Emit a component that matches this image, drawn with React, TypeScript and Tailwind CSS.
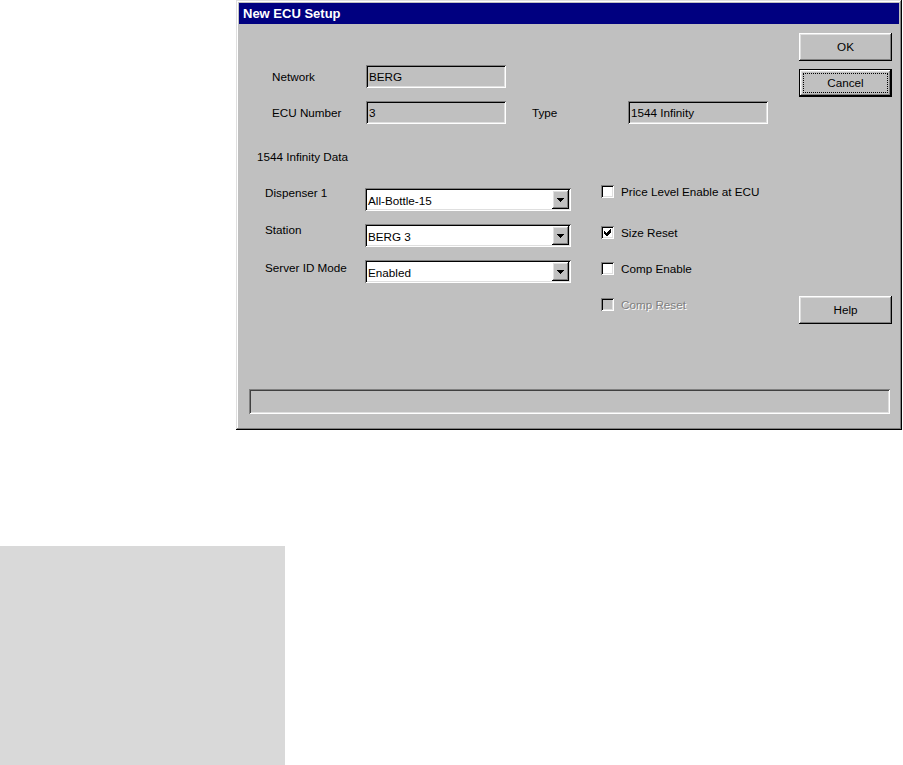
import React from "react";

const sunken =
  "shadow-[inset_1px_1px_#808080,inset_-1px_-1px_#ffffff,inset_2px_2px_#000000,inset_-2px_-2px_#dfdfdf]";
const raised =
  "shadow-[inset_-1px_-1px_#000000,inset_1px_1px_#ffffff,inset_-2px_-2px_#808080,inset_2px_2px_#dfdfdf]";

function Field({ value, width }: { value: string; width: string }) {
  return (
    <div className={`${sunken} ${width} h-[23px] bg-[#c0c0c0] flex items-center pl-[3px]`}>
      {value}
    </div>
  );
}

function Combo({ value }: { value: string }) {
  return (
    <div className={`${sunken} w-[206px] h-[23px] bg-white flex items-stretch p-[2px]`}>
      <span className="flex-1 pl-[1px] pt-[4px] leading-[14px]">{value}</span>
      <div className={`${raised} w-[17px] bg-[#c0c0c0] flex items-center justify-center`}>
        <svg width="7" height="4" viewBox="0 0 7 4" shapeRendering="crispEdges">
          <polygon points="0,0 7,0 4,4 3,4" fill="#000" />
        </svg>
      </div>
    </div>
  );
}

function Check({
  label,
  checked,
  disabled,
  className = "",
}: {
  label: string;
  checked?: boolean;
  disabled?: boolean;
  className?: string;
}) {
  return (
    <div className={`flex items-center h-[13px] ${className}`}>
      <div
        className={`${sunken} w-[13px] h-[13px] shrink-0 flex items-center justify-center ${
          disabled ? "bg-[#c0c0c0]" : "bg-white"
        }`}
      >
        {checked && (
          <svg width="7" height="7" viewBox="0 0 7 7" shapeRendering="crispEdges">
            <polygon points="0,2 2,4 6,0 7,0 7,3 3,7 2,7 0,5" fill="#000" />
          </svg>
        )}
      </div>
      <span
        className={`ml-[7px] whitespace-nowrap ${
          disabled ? "text-[#808080] [text-shadow:1px_1px_0_#ffffff]" : ""
        }`}
      >
        {label}
      </span>
    </div>
  );
}

function Button({ children, isDefault }: { children: React.ReactNode; isDefault?: boolean }) {
  if (isDefault) {
    return (
      <div className="w-[93px] h-[28px] border border-black">
        <div className={`${raised} w-full h-full bg-[#c0c0c0] p-[3px] flex`}>
          <div className="flex-1 border border-dotted border-black flex items-center justify-center">
            {children}
          </div>
        </div>
      </div>
    );
  }
  return (
    <div className={`${raised} w-[93px] h-[28px] bg-[#c0c0c0] flex items-center justify-center`}>
      {children}
    </div>
  );
}

export default function App() {
  return (
    <div className="w-[903px] h-[765px] bg-white overflow-hidden font-['Liberation_Sans',Arial,sans-serif] text-[11.7px] text-black">
      {/* dialog window */}
      <div className="ml-[236px] w-[666px] h-[430px] bg-[#c0c0c0] p-[3px] flex flex-col shadow-[inset_-1px_-1px_#000000,inset_1px_1px_#dfdfdf,inset_-2px_-2px_#808080,inset_2px_2px_#ffffff]">
        <div className="h-[21px] bg-[#000080] text-white font-bold text-[13px] flex items-center pl-[4px]">
          New ECU Setup
        </div>

        <div className="flex-1 flex flex-col">
          <div className="flex items-start">
            {/* form */}
            <div className="w-[560px] flex flex-col">
              <div className="mt-[41px] flex items-center h-[23px]">
                <span className="ml-[33px] w-[94px]">Network</span>
                <Field value="BERG" width="w-[140px]" />
              </div>
              <div className="mt-[13px] flex items-center h-[23px]">
                <span className="ml-[33px] w-[94px]">ECU Number</span>
                <Field value="3" width="w-[140px]" />
                <span className="ml-[26px] w-[96px]">Type</span>
                <Field value="1544 Infinity" width="w-[140px]" />
              </div>
              <div className="mt-[26px] ml-[18px] leading-[13px]">1544 Infinity Data</div>

              <div className="mt-[22px] flex items-start">
                <div className="ml-[26px] w-[100px] mt-[1px] flex flex-col leading-[13px]">
                  <span>Dispenser 1</span>
                  <span className="mt-[24px]">Station</span>
                  <span className="mt-[25px]">Server ID Mode</span>
                </div>
                <div className="mt-[3px] flex flex-col gap-[13px]">
                  <Combo value="All-Bottle-15" />
                  <Combo value="BERG 3" />
                  <Combo value="Enabled" />
                </div>
                <div className="ml-[30px] flex flex-col">
                  <Check label="Price Level Enable at ECU" />
                  <Check label="Size Reset" checked className="mt-[28px]" />
                  <Check label="Comp Enable" className="mt-[23px]" />
                  <Check label="Comp Reset" disabled className="mt-[23px]" />
                </div>
              </div>
            </div>

            {/* buttons */}
            <div className="flex flex-col">
              <div className="mt-[9px]">
                <Button>OK</Button>
              </div>
              <div className="mt-[8px]">
                <Button isDefault>Cancel</Button>
              </div>
              <div className="mt-[199px]">
                <Button>Help</Button>
              </div>
            </div>
          </div>

          {/* status bar */}
          <div className="mt-[65px] ml-[10px] w-[641px] h-[25px] bg-[#c0c0c0] shadow-[inset_1px_1px_#808080,inset_-1px_-1px_#ffffff,inset_2px_2px_#404040,inset_-2px_-2px_#dfdfdf]" />
        </div>
      </div>

      <div className="mt-[116px] w-[285px] h-[219px] bg-[#d9d9d9]" />
    </div>
  );
}
